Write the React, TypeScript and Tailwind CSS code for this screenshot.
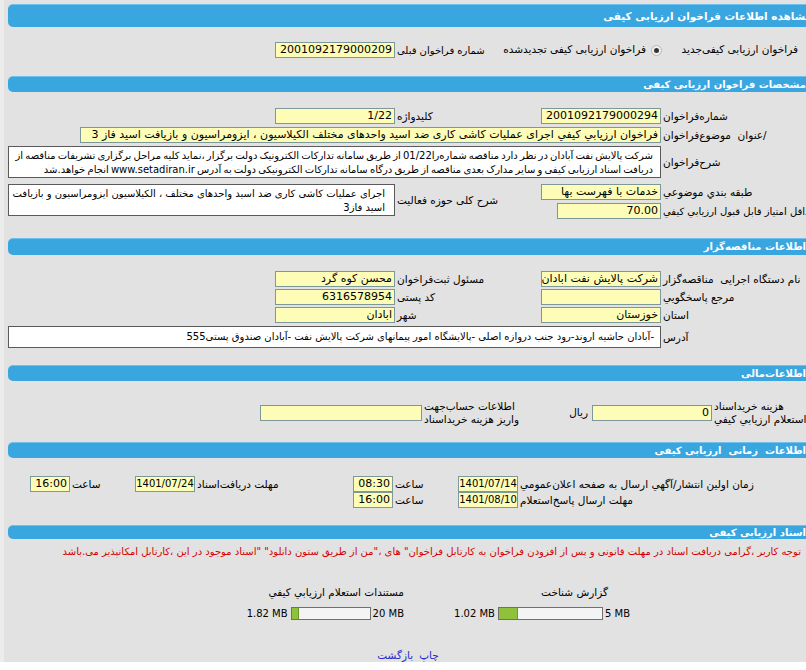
import React from 'react';

function Bar({ title, className }: { title: string; className: string }) {
  return (
    <div
      className={`ml-[4px] rounded-l-[5px] bg-[#3aa6df] border-t border-[#6fc0ea] text-white font-bold pr-[6px] whitespace-nowrap overflow-hidden ${className}`}
    >
      {title}
    </div>
  );
}

function Field({ v, className, size = 'text-[11px] px-[2px]' }: { v?: string; className: string; size?: string }) {
  return (
    <div
      className={`shrink-0 h-[16px] border border-[#7d9898] bg-[#fdfdb8] leading-[14px] whitespace-nowrap overflow-hidden ${size} ${className}`}
    >
      {v}
    </div>
  );
}

// label cells: text sits against the field on their left, overflow runs off to the right
function Label({ t, className }: { t: React.ReactNode; className: string }) {
  return (
    <div className={`shrink-0 flex justify-end pl-[2px] text-[10.5px] leading-[13px] whitespace-pre ${className}`}>
      <span className="text-left">{t}</span>
    </div>
  );
}

function Meter({ used, max, pct, w }: { used: string; max: string; pct: number; w: string }) {
  return (
    <div className="flex items-center text-[10px] leading-[13px] whitespace-nowrap">
      <span dir="ltr" className="pl-[2px]">{max}</span>
      <div dir="ltr" className={`shrink-0 h-[13px] border border-[#707070] bg-[#f4f4f4] ${w}`}>
        <div className="h-full bg-[#8fc23a] border-r border-[#6b9a2a]" style={{ width: `${pct}%` }} />
      </div>
      <span dir="ltr" className="pr-[3px]">{used}</span>
    </div>
  );
}

const dateSize = 'text-[10px] px-0 text-center';

export default function App() {
  return (
    <div className="w-[806px] h-[670px] bg-white overflow-hidden">
      <div
        dir="rtl"
        className="w-[812px] h-[662px] bg-[#e2e2e2] border-l-[4px] border-[#ececec] pt-[4px] text-black font-['DejaVu_Sans',sans-serif]"
      >
        <Bar title="مشاهده اطلاعات فراخوان ارزیابی کیفی" className="h-[23px] text-[10.5px] leading-[22px] !pr-0" />

        {/* نوع فراخوان */}
        <div className="mt-[15px] flex items-center h-[16px] text-[10.5px]">
          <div className="w-[150px] shrink-0 pr-[14px] whitespace-nowrap">فراخوان ارزیابی کیفی‌جدید</div>
          <div className="w-[167px] shrink-0 flex items-center gap-[4px] whitespace-nowrap">
            <span className="ml-[1px] w-[11px] h-[11px] rounded-full border border-[#b8b8b8] bg-[#f0f0f0] flex items-center justify-center">
              <span className="w-[5px] h-[5px] rounded-full bg-[#333]" />
            </span>
            <span>فراخوان ارزیابی کیفی تجدیدشده</span>
          </div>
          <Label t="شماره فراخوان قبلی" className="w-[100px] text-[10px]" />
          <Field v="2001092179000209" className="w-[120px]" />
        </div>

        <Bar title="مشخصات فراخوان ارزیابی کیفی" className="mt-[18px] h-[16px] text-[10px] leading-[15px]" />

        <div className="mt-[16px] flex items-center">
          <Label t="شماره‌فراخوان" className="w-[151px]" />
          <Field v="2001092179000294" className="w-[120px]" />
          <Label t="کلیدواژه" className="w-[146px]" />
          <Field v="1/22" className="w-[120px]" />
        </div>
        <div className="mt-[3px] flex items-center">
          <Label t="/عنوان  موضوع‌فراخوان" className="w-[151px]" />
          <Field
            v="فراخوان ارزيابي كيفي اجرای عملیات کاشی کاری ضد اسید واحدهای مختلف الکیلاسیون ، ایزومراسیون و بازیافت اسید فاز 3"
            className="w-[581px]"
          />
        </div>
        <div className="mt-[3px] flex items-center">
          <Label t="شرح‌فراخوان" className="w-[151px]" />
          <div className="w-[653px] h-[32px] shrink-0 border border-[#5a5a5a] bg-white pr-[7px] pt-[2px] text-[10px] leading-[14px] [word-spacing:-1px] whitespace-nowrap overflow-hidden">
            شرکت پالایش نفت آبادان در نظر دارد مناقصه شماره‌را01/22 از طریق سامانه تدارکات الکترونیک دولت برگزار ،نماید کلیه مراحل برگزاری تشریفات مناقصه از
            <br />
            دریافت اسناد ارزیابی کیفی و سایر مدارک بعدی مناقصه از طریق درگاه سامانه تدارکات الکترونیکی دولت به آدرس www.setadiran.ir انجام خواهد.شد
          </div>
        </div>
        <div className="mt-[6px] flex items-start">
          <div className="w-[271px] shrink-0">
            <div className="flex items-center">
              <Label t="طبقه بندي موضوعي" className="w-[151px]" />
              <Field v="خدمات با فهرست بها" className="w-[120px]" />
            </div>
            <div className="mt-[3px] flex items-center">
              <Label t="حداقل امتیاز قابل قبول ارزيابي كيفي" className="w-[151px] text-[10px]" />
              <Field v="70.00" className="w-[104px]" />
            </div>
          </div>
          <div className="flex items-center">
            <Label t="شرح کلی حوزه فعالیت" className="w-[146px]" />
            <div className="w-[387px] h-[32px] shrink-0 border border-[#5a5a5a] bg-white pr-[9px] pt-[2px] text-[10px] leading-[14px] whitespace-nowrap overflow-hidden">
              اجرای عملیات کاشی کاری ضد اسید واحدهای مختلف ، الکیلاسیون ایزومراسیون و بازیافت
              <br />
              اسید فاز3
            </div>
          </div>
        </div>

        <Bar title="اطلاعات مناقصه‌گزار" className="mt-[19px] h-[17px] text-[10px] leading-[16px]" />

        <div className="mt-[16px] flex items-center">
          <Label t="نام دستگاه اجرایی  مناقصه‌گزار" className="w-[151px]" />
          <Field v="شرکت پالایش نفت ابادان" className="w-[120px]" />
          <Label t="مسئول ثبت‌فراخوان" className="w-[146px]" />
          <Field v="محسن کوه گرد" className="w-[120px]" />
        </div>
        <div className="mt-[2px] flex items-center">
          <Label t="مرجع پاسخگويي" className="w-[151px]" />
          <Field className="w-[120px]" />
          <Label t="کد پستی" className="w-[146px]" />
          <Field v="6316578954" className="w-[120px]" />
        </div>
        <div className="mt-[2px] flex items-center">
          <Label t="استان" className="w-[151px]" />
          <Field v="خوزستان" className="w-[120px]" />
          <Label t="شهر" className="w-[146px]" />
          <Field v="ابادان" className="w-[120px]" />
        </div>
        <div className="mt-[3px] flex items-center">
          <Label t="آدرس" className="w-[151px]" />
          <div className="w-[653px] h-[22px] shrink-0 border border-[#5a5a5a] bg-white pr-[6px] text-[10px] leading-[20px] whitespace-nowrap overflow-hidden">
            -آبادان حاشیه اروند-رود جنب دروازه اصلی -پالایشگاه امور پیمانهای شرکت پالایش نفت -آبادان صندوق پستی555
          </div>
        </div>

        <Bar title="اطلاعات‌مالی" className="mt-[17px] h-[16px] text-[10px] leading-[15px]" />

        <div className="mt-[19px] h-[26px] flex items-center">
          <Label
            t={
              <>
                {' '}هزینه خریداسناد
                <br />
                استعلام ارزيابي كيفي
              </>
            }
            className="w-[100px]"
          />
          <Field v="0" className="w-[120px]" />
          <div className="w-[27px] shrink-0 pr-[4px] text-[10.5px] whitespace-nowrap">ریال</div>
          <Label
            t={
              <>
                اطلاعات حساب‌جهت
                <br />
                واریز هزینه خریداسناد
              </>
            }
            className="w-[143px]"
          />
          <Field className="w-[162px]" />
        </div>

        <Bar title="اطلاعات  زمانی  ارزیابی کیفی" className="mt-[16px] h-[16px] text-[10px] leading-[15px] whitespace-pre" />

        <div className="mt-[18px] flex items-center">
          <Label t="زمان اولین انتشار/آگهي ارسال به صفحه اعلان‌عمومي" className="w-[294px]" />
          <Field v="1401/07/14" className="w-[60px]" size={dateSize} />
          <Label t="ساعت" className="w-[65px]" />
          <Field v="08:30" className="w-[40px]" />
          <Label t="مهلت دریافت‌اسناد" className="w-[158px]" />
          <Field v="1401/07/24" className="w-[60px]" size={dateSize} />
          <Label t="ساعت" className="w-[65px]" />
          <Field v="16:00" className="w-[40px]" />
        </div>
        <div className="flex items-center">
          <Label t="مهلت ارسال پاسخ‌استعلام" className="w-[294px]" />
          <Field v="1401/08/10" className="w-[60px]" size={dateSize} />
          <Label t="ساعت" className="w-[65px]" />
          <Field v="16:00" className="w-[40px]" />
        </div>

        <Bar title="اسناد ارزیابی کیفی" className="mt-[17px] h-[14px] text-[10px] leading-[13px]" />

        <div className="mt-[6px] pr-[11px] text-[10px] leading-[13px] text-[#d40000] whitespace-nowrap">
          توجه کاربر ،گرامی دریافت اسناد در مهلت قانونی و پس از افزودن فراخوان به کارتابل فراخوان" های ،"من از طریق ستون دانلود" "اسناد موجود در این ،کارتابل امکانپذیر می.باشد
        </div>

        <div className="mt-[28px] flex items-start pr-[182px]">
          <div className="w-[162px] shrink-0">
            <div className="pr-[22px] text-[10.5px] leading-[13px]">گزارش شناخت</div>
            <div className="mt-[8px]">
              <Meter max="5 MB" used="1.02 MB" pct={18} w="w-[105px]" />
            </div>
          </div>
          <div className="mr-[64px] w-[146px] shrink-0">
            <div className="text-[10.5px] leading-[13px] whitespace-nowrap">مستندات استعلام ارزيابي كيفي</div>
            <div className="mt-[8px]">
              <Meter max="20 MB" used="1.82 MB" pct={10} w="w-[80px]" />
            </div>
          </div>
        </div>

        <div className="mt-[29px] flex justify-center gap-[6px] text-[10.5px] leading-[13px] text-[#2a2ad0]">
          <span>چاپ</span>
          <span>بازگشت</span>
        </div>
      </div>
    </div>
  );
}
